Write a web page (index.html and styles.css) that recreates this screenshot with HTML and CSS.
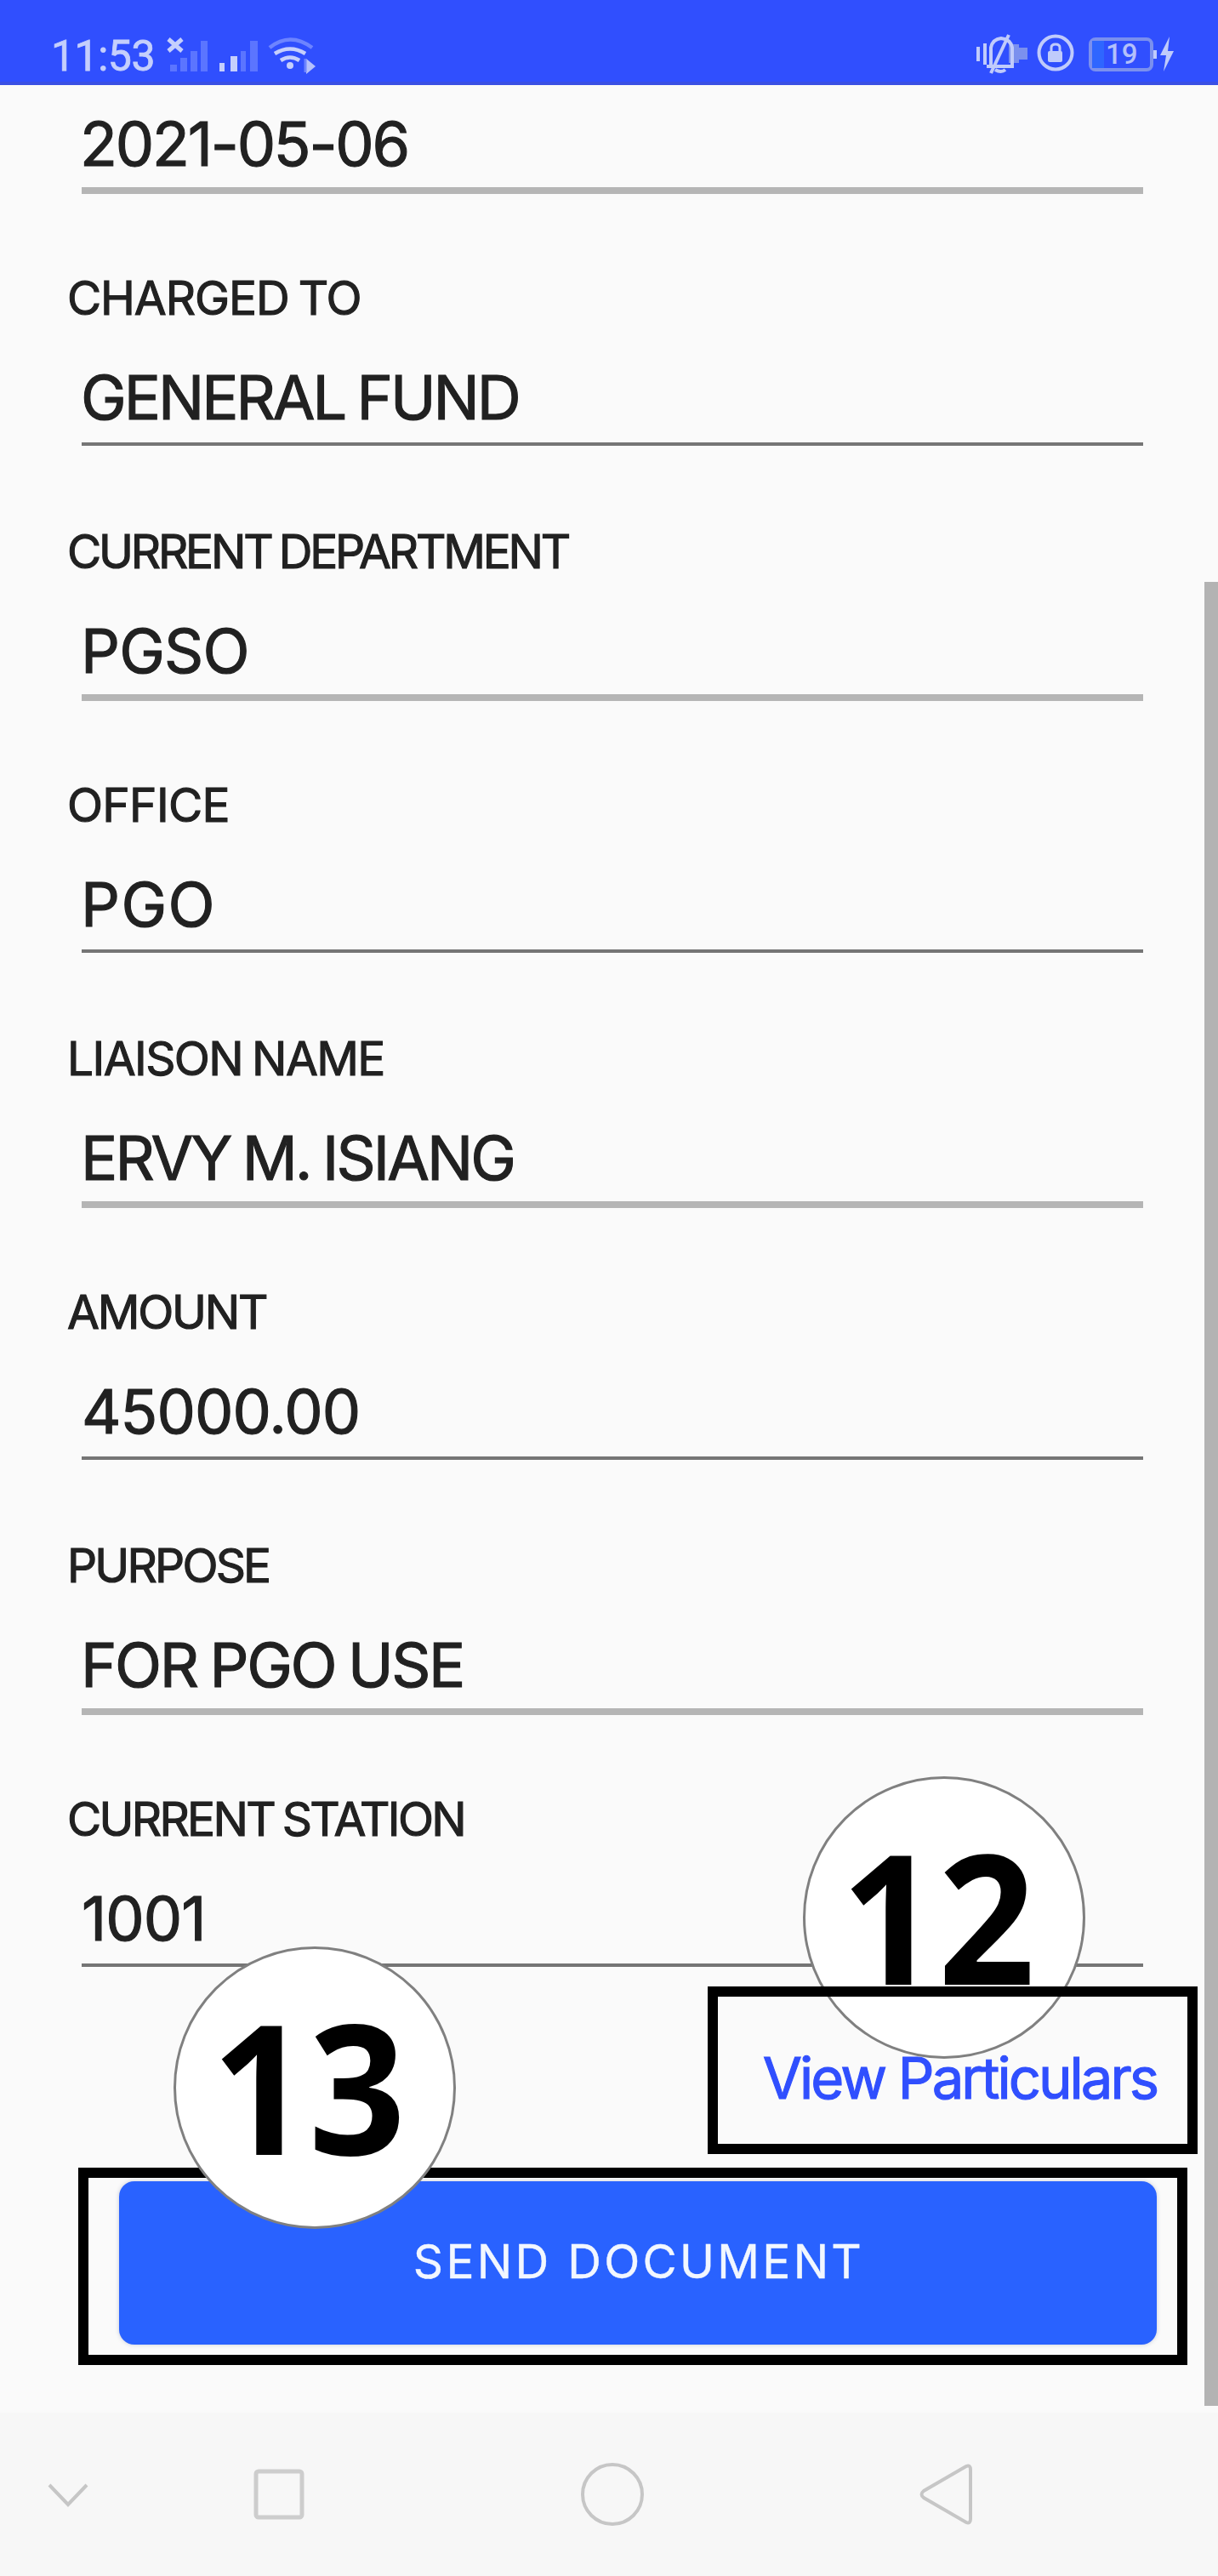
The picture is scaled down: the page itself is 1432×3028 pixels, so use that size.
FILE: index.html
```
<!DOCTYPE html>
<html lang="en">
<head>
<meta charset="utf-8">
<title>Document details</title>
<link rel="stylesheet" href="styles.css">
</head>
<body>
<div class="screen">
  <header class="status">
    <div class="status-left">
      <span class="time">11:53</span>
      <svg class="signals" width="184" height="48" viewBox="194 42 184 48">
        <g fill="#5b75ff">
          <path d="M200 76h8v8h-8zM212 68h8v16h-8zM224 60h8v24h-8zM236 48h8v36h-8z"/>
          <path d="M283 60h6v24h-6zM294 48h9v36h-9z"/>
        </g>
        <path d="M198 46l16 14M214 46l-16 14" stroke="#c5cffc" stroke-width="5" fill="none"/>
        <path d="M258 74h6v10h-6zM271 66h8v18h-8z" fill="#c5cffc"/>
        <g fill="none" stroke-width="4.5">
          <path d="M317 56q24 -19 50 0" stroke="#6d84ff"/>
          <path d="M323 63q18 -11 36 0M330 71q11 -7 22 0" stroke="#c5cffc"/>
        </g>
        <circle cx="341" cy="77" r="4" fill="#c5cffc"/>
        <path d="M360 69l11 9-11 9z" fill="#b5c1fb"/>
        <path d="M359 69v16" stroke="#6d84ff" stroke-width="3"/>
      </svg>
    </div>
    <div class="status-right">
      <svg width="118" height="52" viewBox="1146 38 118 52" fill="none" stroke="#c0cbfb">
        <path d="M1150 55v17M1158 51v25" stroke-width="4"/>
        <path d="M1186 52h12v4h10v14h-10v4h-12z" fill="#7b90ee" stroke="none"/>
        <path d="M1160 78h32M1165 76V56q2-10 12-11q11 1 13 11v20M1170 82q7 4 12 0" stroke-width="4"/>
        <path d="M1165 86l21-45" stroke-width="4"/>
        <circle cx="1241" cy="62" r="19.500" stroke-width="4"/>
        <path d="M1236 61v-5q0-4 5-4t5 4v5" stroke-width="3"/>
        <rect x="1232" y="60" width="17" height="13" rx="2" fill="#c0cbfb" stroke="none"/>
      </svg>
      <div class="battery"><span class="charge"></span><span class="percent">19</span></div>
      <svg class="bolt" width="26" height="44" viewBox="1356 42 26 44" fill="#c0cbfb">
        <path d="M1356 59h4v10h-4zM1375 43l-11 22h7l-3 19 12-24h-7z"/>
      </svg>
    </div>
  </header>

  <main class="form">
    <div class="field"><div class="value date">2021-05-06</div></div>
    <div class="field thin"><div class="label charged">CHARGED TO</div><div class="value fund">GENERAL FUND</div></div>
    <div class="field"><div class="label department">CURRENT DEPARTMENT</div><div class="value code">PGSO</div></div>
    <div class="field thin"><div class="label office">OFFICE</div><div class="value office-code">PGO</div></div>
    <div class="field"><div class="label liaison">LIAISON NAME</div><div class="value person">ERVY M. ISIANG</div></div>
    <div class="field thin"><div class="label amount">AMOUNT</div><div class="value money">45000.00</div></div>
    <div class="field"><div class="label purpose">PURPOSE</div><div class="value use">FOR PGO USE</div></div>
    <div class="field thin"><div class="label station">CURRENT STATION</div><div class="value number">1001</div></div>
    <a class="particulars">View Particulars</a>
    <button class="send">SEND DOCUMENT</button>
  </main>

  <nav class="nav">
    <svg width="1432" height="192" viewBox="0 2836 1432 192" fill="none" stroke="#c6c6c6" stroke-width="4">
      <path d="M58 2921l22 23 22-23"/>
      <rect x="301" y="2905" width="54" height="54" rx="3" stroke="#cdcdcd" stroke-width="5"/>
      <circle cx="720" cy="2932" r="35"/>
      <path d="M1136 2899L1086 2928q-5 4 0 8l50 29q5 2 5-4V2903q0-6-5-4z"/>
    </svg>
  </nav>

  <div class="scrollbar"></div>
  <div class="frame frame-send"></div>
  <div class="callout callout-12"><span>12</span></div>
  <div class="callout callout-13"><span>13</span></div>
  <div class="frame frame-view"></div>
</div>
</body>
</html>
```
FILE: styles.css
```
* { box-sizing: border-box; }
body { margin: 0; background: #fafafa; font-family: Inter, "Liberation Sans", sans-serif; }
.screen { position: relative; width: 1432px; height: 3028px; overflow: hidden; display: flex; flex-direction: column; }

.status { height: 100px; flex: none; display: flex; justify-content: space-between; padding: 38px 50px 0 60px; background: #304ffe; border-bottom: 4px solid #3a50e4; }
.status-left, .status-right { display: flex; align-items: flex-start; }
.time { width: 134px; font: 400 50px/56px Roboto, sans-serif; letter-spacing: -0.5px; color: #c5cffc; -webkit-text-stroke: 0.8px #c5cffc; }
.signals { margin-top: 4px; }
.battery { margin: 6px 0 0 16px; width: 76px; height: 40px; border: 4px solid #7b90ee; border-radius: 8px; display: flex; }
.charge { width: 14px; background: #2f66ff; }
.percent { padding-left: 2px; font: 500 33px/32px Roboto, sans-serif; color: #b3c0fa; }
.bolt { margin-top: 4px; }

.form { height: 2736px; flex: none; padding: 0 72px 0 80px; display: flex; flex-direction: column; color: #212121; -webkit-text-stroke: 1.1px; }
.field { height: 300px; flex: none; display: flex; flex-direction: column; justify-content: flex-end; }
.thin { height: 296px; }
.field:first-child { height: 128px; }
.label { font-size: 55px; line-height: 66px; padding-bottom: 35px; margin-left: -1px; word-spacing: -3px; white-space: nowrap; }
.value { height: 108px; margin: 0 16px; padding-top: 13px; font-size: 72px; line-height: 72px; border-bottom: 8px solid #b5b5b5; word-spacing: -3px; white-space: nowrap; }
.thin .label { padding-bottom: 31px; }
.thin .value { height: 110px; padding-top: 17px; border-bottom: 4px solid #757575; }
.date { letter-spacing: -2.2px; text-indent: -2px; }
.fund { letter-spacing: -3px; text-indent: -1px; }
.code { letter-spacing: -0.8px; text-indent: -1px; }
.office-code { letter-spacing: 1.4px; text-indent: -1px; }
.person { letter-spacing: -2.9px; text-indent: -1px; }
.money { letter-spacing: -0.9px; }
.use { letter-spacing: -2.4px; text-indent: -1px; }
.number { letter-spacing: -1px; }
.charged { letter-spacing: -1.1px; }
.department { letter-spacing: -3.2px; }
.office { letter-spacing: -0.7px; }
.liaison { letter-spacing: -1.6px; }
.amount { letter-spacing: -2.2px; }
.purpose { letter-spacing: -2.8px; }
.station { letter-spacing: -2.7px; }

.particulars { align-self: flex-end; height: 80px; margin: 91px 0 0 0; font-size: 67px; line-height: 80px; letter-spacing: -3px; color: #304ffe; white-space: nowrap; }
.send { margin: 81px 0 0 60px; width: 1220px; height: 192px; flex: none; border: 0; border-radius: 18px; background: #2962ff; color: #f2f7ff; font-family: inherit; font-size: 55px; line-height: 66px; letter-spacing: 3.3px; padding: 0 0 5px 2px; box-shadow: 0 0 5px rgba(40, 60, 120, .25); -webkit-text-stroke: 0.4px; }

.nav { height: 192px; flex: none; background: #f7f7f7; }
.nav svg { display: block; }

.scrollbar { position: absolute; left: 1416px; top: 684px; width: 16px; height: 2144px; background: #b3b3b3; }
.frame { position: absolute; border: 12px solid #000; }
.frame-view { left: 832px; top: 2335px; width: 576px; height: 197px; }
.frame-send { left: 92px; top: 2548px; width: 1304px; height: 232px; }
.callout { position: absolute; width: 332px; height: 332px; border: 3px solid #808080; border-radius: 50%; background: #fff; color: #000; font: 700 212px/320px "Open Sans", sans-serif; text-align: center; }
.callout span { display: block; margin-left: -14px; transform: scaleX(.94); }
.callout-12 { left: 944px; top: 2088px; }
.callout-13 { left: 204px; top: 2288px; }
```
